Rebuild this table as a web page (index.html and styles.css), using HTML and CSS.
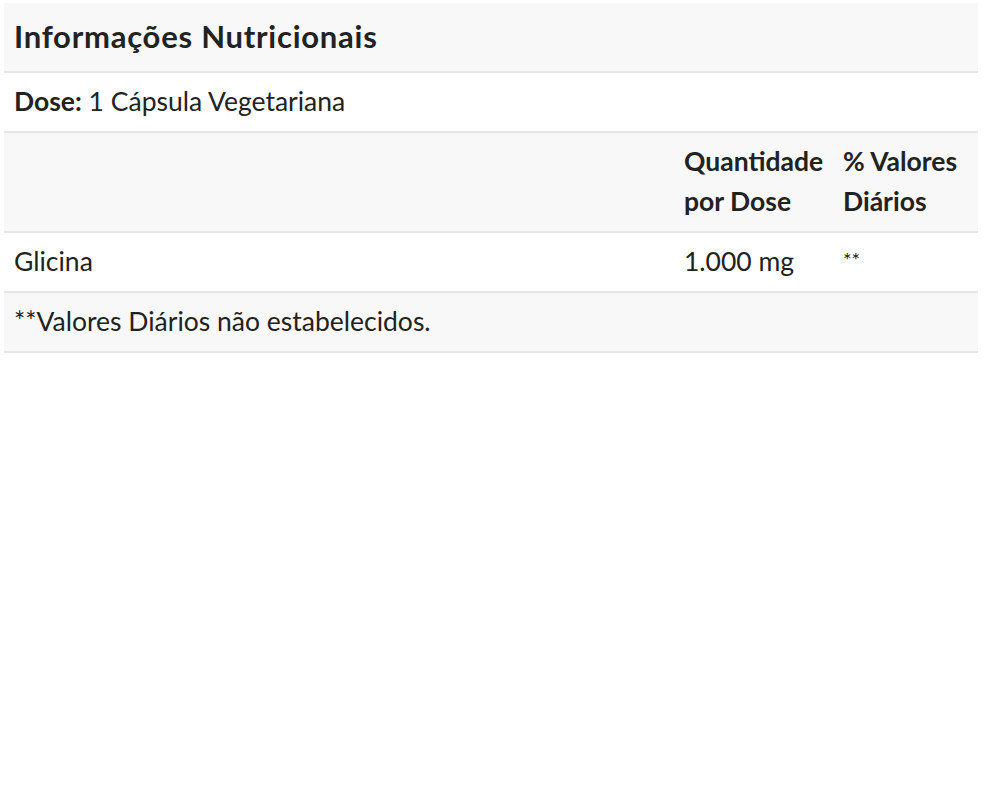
FILE: index.html
```html
<!DOCTYPE html>
<html lang="pt">
<head>
<meta charset="utf-8">
<link rel="stylesheet" href="styles.css">
</head>
<body>
<div class="panel">
  <div class="title">Informações Nutricionais</div>
  <div class="row white dose"><b>Dose:</b> 1 Cápsula Vegetariana</div>
  <div class="row grey grid head">
    <div></div>
    <div class="b">Quantidade<br>por Dose</div>
    <div class="b">% Valores<br>Diários</div>
  </div>
  <div class="row white grid">
    <div>Glicina</div>
    <div>1.000 mg</div>
    <div class="stars">**</div>
  </div>
  <div class="row grey foot">**Valores Diários não estabelecidos.</div>
</div>
</body>
</html>
```
FILE: styles.css
```css
html, body { margin: 0; padding: 0; background: #fff; }
body {
  font-family: Lato, "Noto Sans", sans-serif;
  color: #222;
  font-size: 26.5px;
}
.panel {
  margin: 3px 18px 0 4px;
  width: 974px;
}
.title {
  background: #f8f8f8;
  font-weight: 700;
  font-size: 31px;
  letter-spacing: 0.75px;
  line-height: 30px;
  padding: 18px 10px 20px 10px;
  border-bottom: 2px solid #e6e6e6;
}
.row {
  padding: 8px 10px 10px;
  line-height: 40px;
  border-bottom: 2px solid #e6e6e6;
}
.white { background: #fff; }
.grey { background: #f8f8f8; }
.grid {
  display: grid;
  grid-template-columns: 670px 159px 1fr;
}
.b { font-weight: 700; }
.dose b { font-weight: 700; }
.stars { font-size: 20px; line-height: 36px; }
```
